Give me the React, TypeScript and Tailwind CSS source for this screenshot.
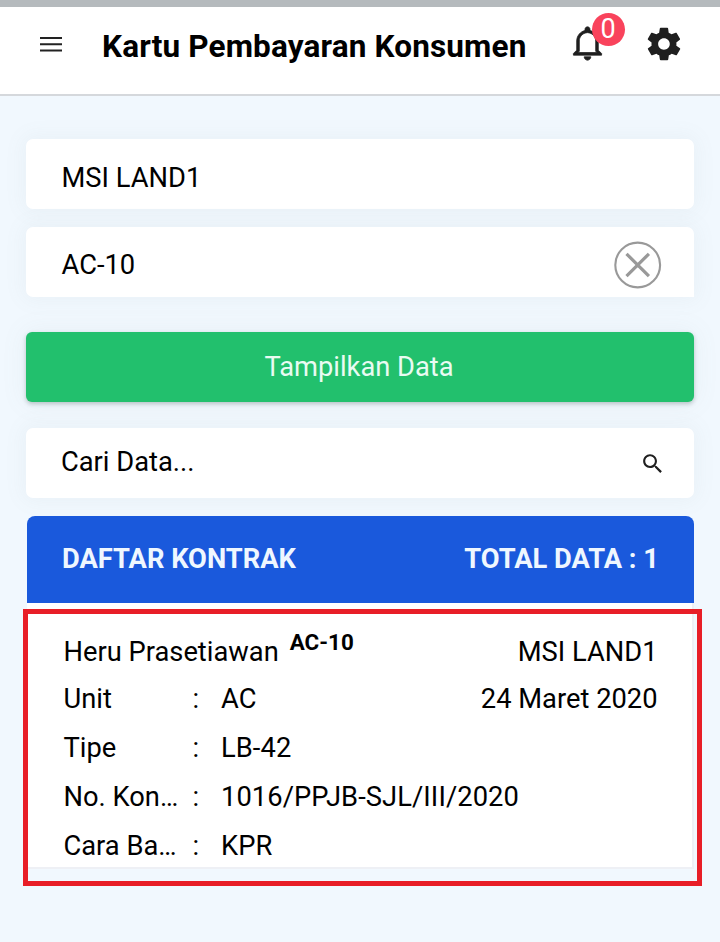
import { IoMdNotificationsOutline, IoMdSearch, IoMdSettings } from "react-icons/io";

const details = [
  { label: "Unit", value: "AC", right: "24 Maret 2020" },
  { label: "Tipe", value: "LB-42" },
  { label: "No. Kon…", value: "1016/PPJB-SJL/III/2020" },
  { label: "Cara Ba…", value: "KPR" },
];

function Header() {
  return (
    <header className="flex h-[89px] items-start border-b-2 border-[#d5d8dc] bg-white pl-10">
      <svg className="mt-[29px] h-4 w-[22px] shrink-0" viewBox="0 0 22 16" stroke="#222" strokeWidth="2">
        <path d="M0 2h22M0 8.2h22M0 14.4h22" />
      </svg>
      <h1 className="ml-10 mt-5 w-[464.5px] shrink-0 whitespace-nowrap text-[31.5px] font-bold leading-10 tracking-[0.15px] text-black">
        Kartu Pembayaran Konsumen
      </h1>
      <div className="relative mt-4 shrink-0">
        <IoMdNotificationsOutline className="size-[41px] stroke-current stroke-[10px] text-[#1f1f1f]" />
        <span className="absolute left-[25.5px] top-[-10px] flex size-[33px] items-center justify-center rounded-full bg-[#f9435c] pr-px text-[27px] leading-none text-white">
          0
        </span>
      </div>
      <IoMdSettings className="ml-[36.5px] mt-[17px] size-10 shrink-0 text-[#1f1f1f]" />
    </header>
  );
}

export default function App() {
  return (
    <div className="h-[942px] w-[720px] overflow-hidden bg-[#f1f8fe] font-['Roboto',sans-serif] text-[27.3px] leading-8 text-black">
      <div className="h-[7px] bg-[#b5babd]" />
      <Header />
      <main className="flex flex-col px-[26px] pt-[43px]">
        <div className="flex h-[70px] items-center rounded-[7px] bg-white px-[35.5px] pt-2 shadow-[0_0_20px_4px_rgba(120,130,140,0.06)]">
          MSI LAND1
        </div>
        <div className="mt-[18px] flex h-[70px] items-center justify-between rounded-[7px] rounded-br-none bg-white pl-[35.5px] pr-8 pt-1.5 shadow-[0_0_20px_4px_rgba(120,130,140,0.06)]">
          AC-10
          <svg className="size-12" viewBox="0 0 48 48" fill="none" stroke="#999">
            <circle cx="23.7" cy="24" r="22.4" strokeWidth="2.1" />
            <path d="M12.5 12.8l22.4 22.4M34.9 12.8l-22.4 22.4" strokeWidth="3.2" />
          </svg>
        </div>
        <button className="mt-[35px] flex h-[70px] w-full items-center justify-center rounded-[6px] bg-[#22c06d] pr-0.5 text-[#e9fbf2] shadow-[0_2px_4px_rgba(60,80,80,0.3),0_0_24px_4px_rgba(120,130,140,0.06)]">
          Tampilkan Data
        </button>
        <div className="mt-[26px] flex h-[70px] items-center justify-between rounded-[7px] bg-white pl-[35px] pr-[29.5px] shadow-[0_0_20px_4px_rgba(120,130,140,0.06)]">
          <span className="-mt-0.5">Cari Data...</span>
          <IoMdSearch className="size-[25px] text-[#1f1f1f]" />
        </div>
        <section className="relative ml-px mt-[18px]">
          <div className="flex h-[87px] items-center justify-between rounded-t-[8px] bg-[#1a59dc] pb-0.5 pl-[35px] pr-[35px] font-bold text-[#eff7ff]">
            <span>DAFTAR KONTRAK</span>
            <span>TOTAL DATA : 1</span>
          </div>
          <div className="h-[266px] border-b-2 border-r-2 border-[#eef0f5] bg-white pl-[36.5px] pr-[34.5px] pt-[33px]">
            <div className="flex h-8 justify-between whitespace-nowrap">
              <div className="flex">
                Heru Prasetiawan
                <strong className="-mt-2.5 ml-[11px] text-[22.4px]">AC-10</strong>
              </div>
              <span>MSI LAND1</span>
            </div>
            <div className="mt-[15px] flex flex-col gap-[17px]">
              {details.map((item) => (
                <div key={item.label} className="flex h-8 whitespace-nowrap">
                  <span className="w-[116px]">{item.label}</span>
                  <span className="ml-[13px] w-[28.5px]">:</span>
                  <span className="tracking-[0.08px]">{item.value}</span>
                  {item.right && <span className="ml-auto">{item.right}</span>}
                </div>
              ))}
            </div>
          </div>
          <div className="pointer-events-none absolute -left-1 top-[93px] h-[277px] w-[679px] border-[5px] border-[#e81e27]" />
        </section>
      </main>
    </div>
  );
}
